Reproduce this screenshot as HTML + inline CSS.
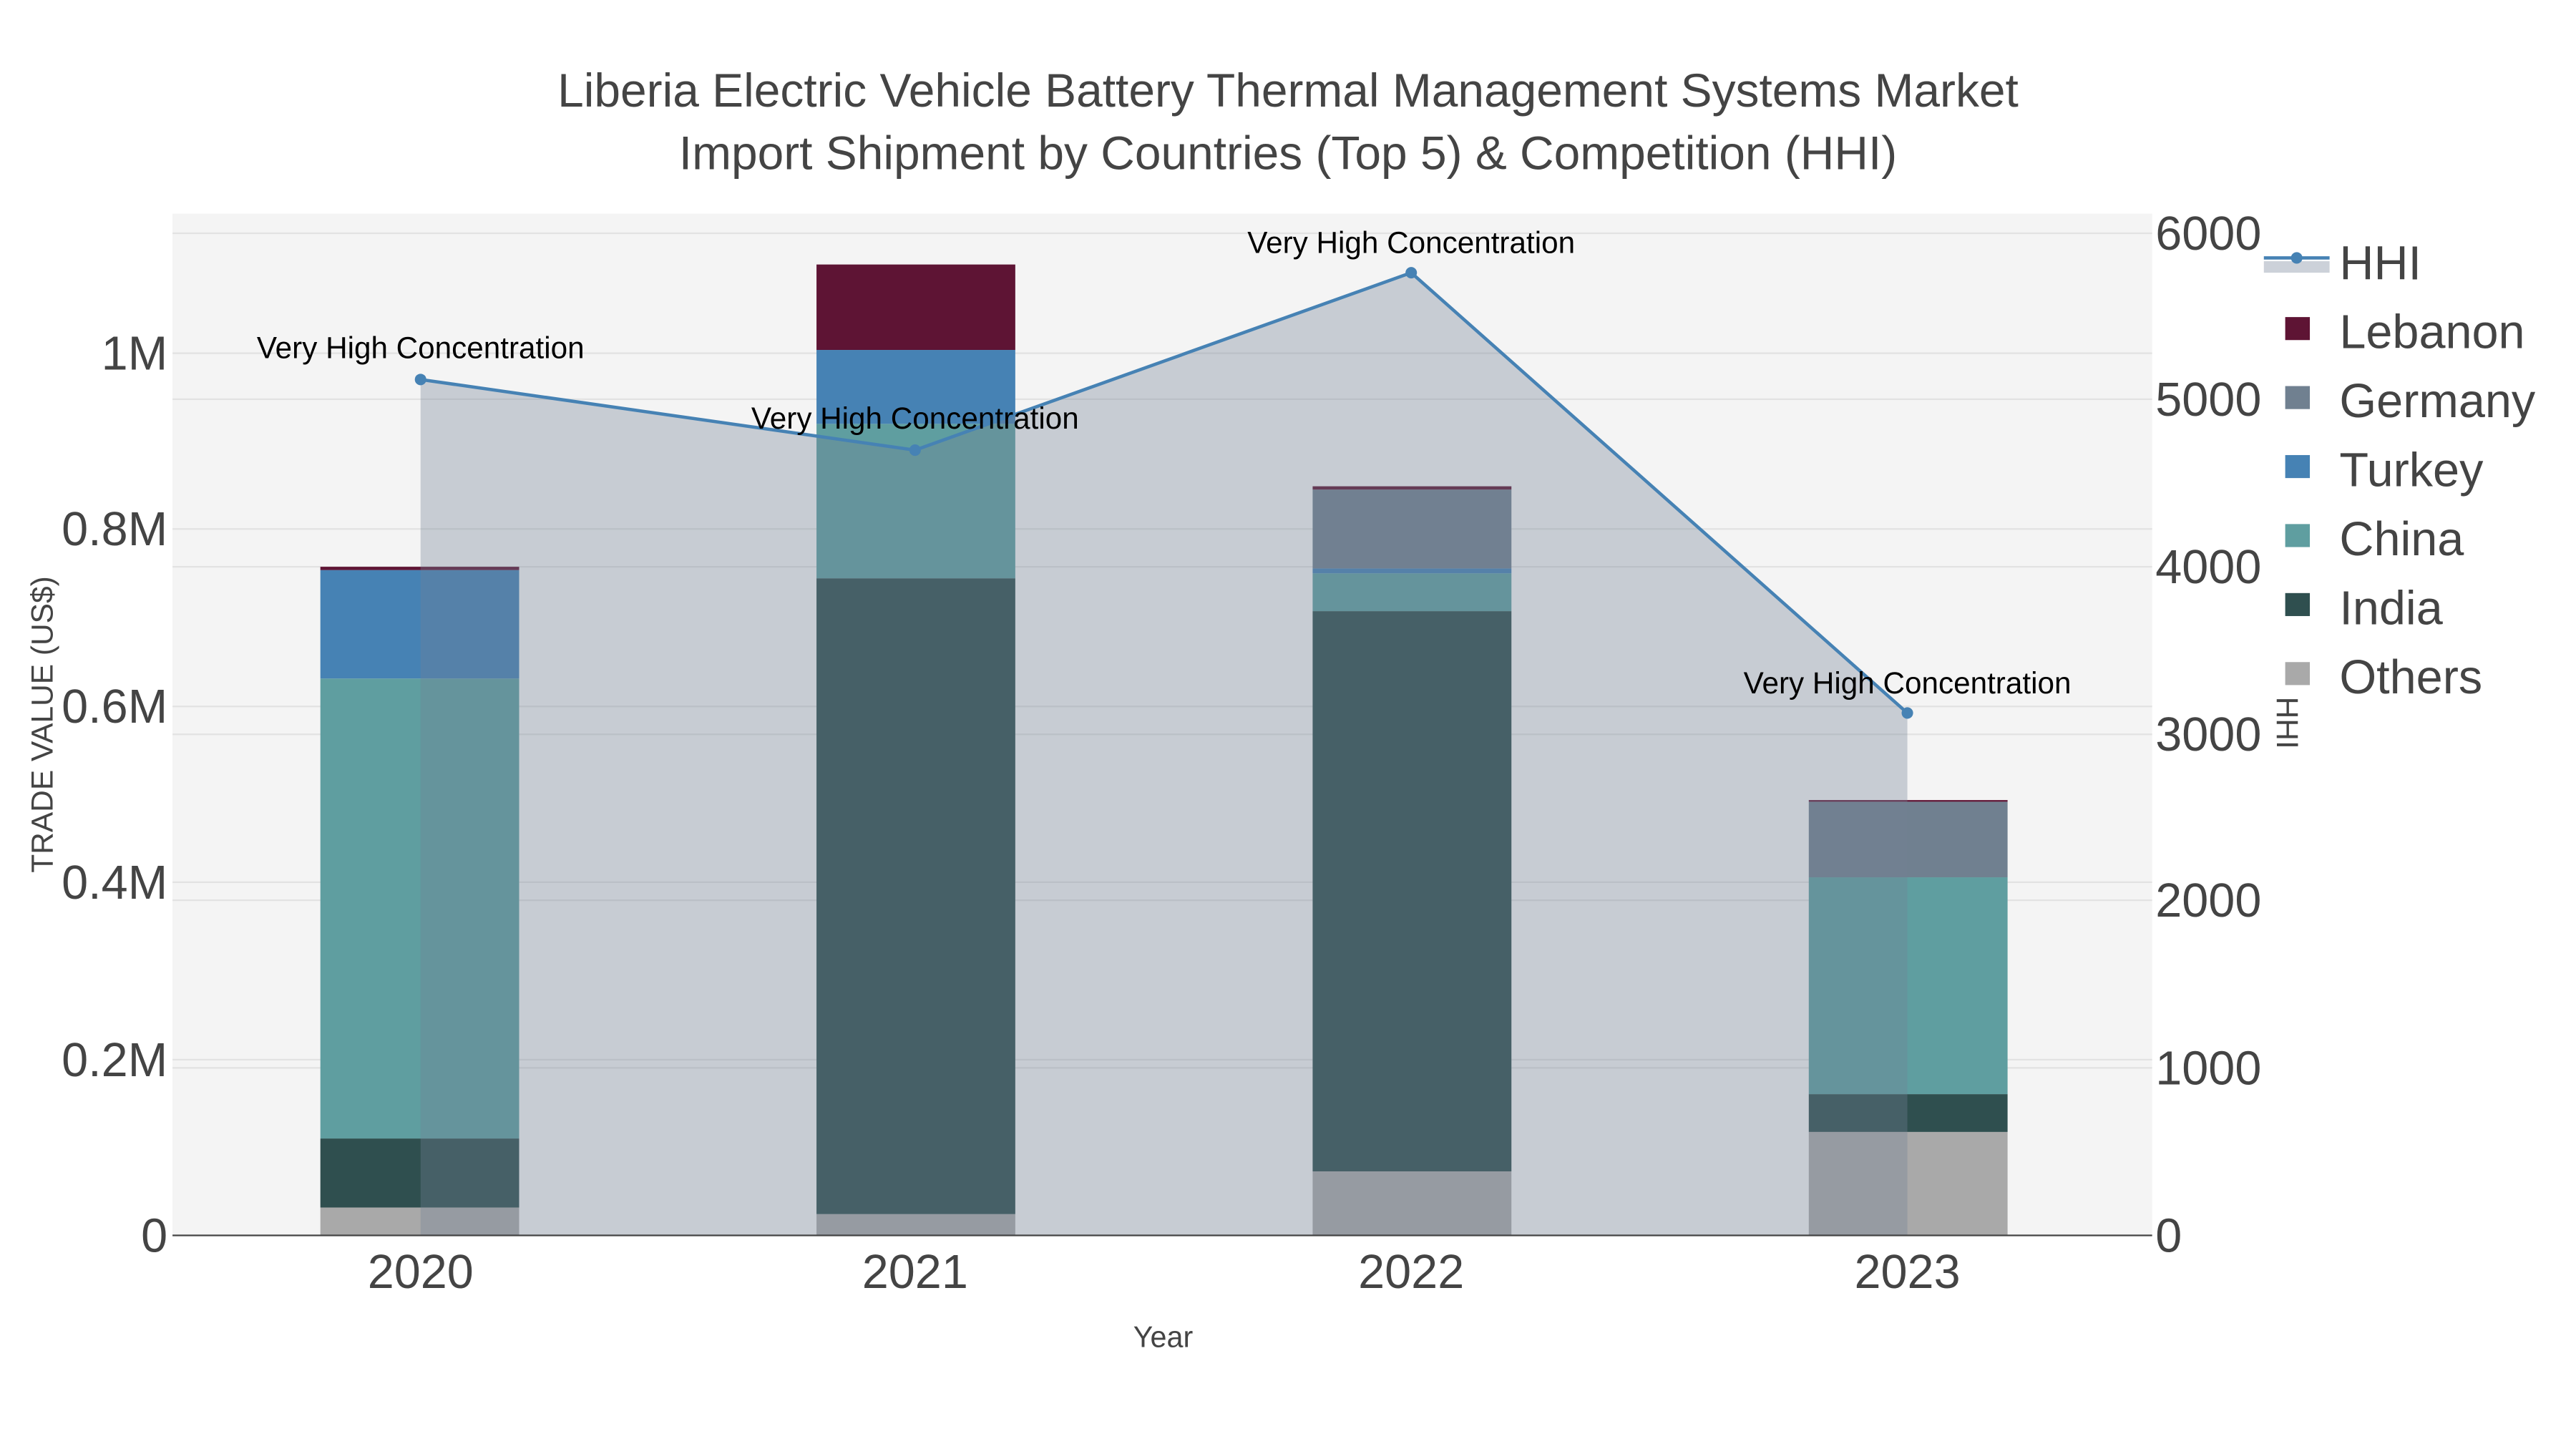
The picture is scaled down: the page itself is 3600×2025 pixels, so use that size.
<!DOCTYPE html>
<html><head><meta charset="utf-8"><style>
html,body{margin:0;padding:0;background:#fff;}
svg{display:block;}
text{font-family:"Liberation Sans",sans-serif;}
</style></head><body>
<svg width="3600" height="2025" viewBox="0 0 1568 882" preserveAspectRatio="none" xmlns="http://www.w3.org/2000/svg">
<rect x="0" y="0" width="1568" height="882" fill="#fff"/>
<rect x="105" y="130" width="1205" height="622" fill="#f4f4f4"/>
<g stroke="#e2e2e2" stroke-width="1">
<line x1="105" x2="1310" y1="645" y2="645"/><line x1="105" x2="1310" y1="537" y2="537"/>
<line x1="105" x2="1310" y1="430" y2="430"/><line x1="105" x2="1310" y1="322" y2="322"/>
<line x1="105" x2="1310" y1="215" y2="215"/>
<line x1="105" x2="1310" y1="142" y2="142"/><line x1="105" x2="1310" y1="243" y2="243"/>
<line x1="105" x2="1310" y1="345" y2="345"/><line x1="105" x2="1310" y1="447" y2="447"/>
<line x1="105" x2="1310" y1="548" y2="548"/><line x1="105" x2="1310" y1="650" y2="650"/>
</g>
<g>
<rect x="195" y="735" width="121" height="17" fill="#a9a9a9"/>
<rect x="195" y="693" width="121" height="42" fill="#2f4f4f"/>
<rect x="195" y="413" width="121" height="280" fill="#5f9ea0"/>
<rect x="195" y="347" width="121" height="66" fill="#4682b4"/>
<rect x="195" y="345" width="121" height="2" fill="#5e1434"/>

<rect x="497" y="739" width="121" height="13" fill="#a9a9a9"/>
<rect x="497" y="352" width="121" height="387" fill="#2f4f4f"/>
<rect x="497" y="258" width="121" height="94" fill="#5f9ea0"/>
<rect x="497" y="213" width="121" height="45" fill="#4682b4"/>
<rect x="497" y="161" width="121" height="52" fill="#5e1434"/>

<rect x="799" y="713" width="121" height="39" fill="#a9a9a9"/>
<rect x="799" y="372" width="121" height="341" fill="#2f4f4f"/>
<rect x="799" y="349" width="121" height="23" fill="#5f9ea0"/>
<rect x="799" y="346" width="121" height="3" fill="#4682b4"/>
<rect x="799" y="298" width="121" height="48" fill="#708090"/>
<rect x="799" y="296" width="121" height="2" fill="#5e1434"/>

<rect x="1101" y="689" width="121" height="63" fill="#a9a9a9"/>
<rect x="1101" y="666" width="121" height="23" fill="#2f4f4f"/>
<rect x="1101" y="534" width="121" height="132" fill="#5f9ea0"/>
<rect x="1101" y="488" width="121" height="46" fill="#708090"/>
<rect x="1101" y="487" width="121" height="1" fill="#5e1434"/>
</g>
<polygon points="256,231 557,274 859,166 1161,434 1161,752 256,752" fill="rgba(115,130,148,0.35)"/>
<line x1="105" x2="1310" y1="752" y2="752" stroke="#444" stroke-width="1"/>
<polyline points="256,231 557,274 859,166 1161,434" fill="none" stroke="#4682b4" stroke-width="2"/>
<g fill="#4682b4"><circle cx="256" cy="231" r="3.5"/><circle cx="557" cy="274" r="3.5"/><circle cx="859" cy="166" r="3.5"/><circle cx="1161" cy="434" r="3.5"/></g>
<g font-size="18.4" fill="#000" text-anchor="middle">
<text x="256" y="218">Very High Concentration</text>
<text x="557" y="261">Very High Concentration</text>
<text x="859" y="154">Very High Concentration</text>
<text x="1161" y="422">Very High Concentration</text>
</g>
<g font-size="28.7" fill="#444" text-anchor="middle">
<text x="784" y="65">Liberia Electric Vehicle Battery Thermal Management Systems Market</text>
<text x="784" y="103">Import Shipment by Countries (Top 5) &amp; Competition (HHI)</text>
</g>
<g font-size="29" fill="#444" text-anchor="end">
<text x="102" y="762">0</text><text x="102" y="655">0.2M</text><text x="102" y="547">0.4M</text>
<text x="102" y="440">0.6M</text><text x="102" y="332">0.8M</text><text x="102" y="225">1M</text>
</g>
<g font-size="29" fill="#444" text-anchor="start">
<text x="1312" y="762">0</text><text x="1312" y="660">1000</text><text x="1312" y="558">2000</text>
<text x="1312" y="457">3000</text><text x="1312" y="355">4000</text><text x="1312" y="253">5000</text>
<text x="1312" y="152">6000</text>
</g>
<g font-size="29" fill="#444" text-anchor="middle">
<text x="256" y="784">2020</text><text x="557" y="784">2021</text><text x="859" y="784">2022</text><text x="1161" y="784">2023</text>
</g>
<text x="708" y="820" font-size="18" fill="#444" text-anchor="middle">Year</text>
<text transform="translate(32,441) rotate(-90)" font-size="18.5" fill="#444" text-anchor="middle">TRADE VALUE (US$)</text>
<text transform="translate(1386,440) rotate(90)" font-size="18.5" fill="#444" text-anchor="middle">HHI</text>
<rect x="1378" y="159" width="40" height="7" fill="#ccd1d9"/>
<line x1="1378" x2="1418" y1="157" y2="157" stroke="#4682b4" stroke-width="2"/>
<circle cx="1398" cy="157" r="3.5" fill="#4682b4"/>
<g>
<rect x="1391" y="193" width="15" height="14" fill="#5e1434"/>
<rect x="1391" y="235" width="15" height="14" fill="#708090"/>
<rect x="1391" y="277" width="15" height="14" fill="#4682b4"/>
<rect x="1391" y="319" width="15" height="14" fill="#5f9ea0"/>
<rect x="1391" y="361" width="15" height="14" fill="#2f4f4f"/>
<rect x="1391" y="403" width="15" height="14" fill="#a9a9a9"/>
</g>
<g font-size="29" fill="#444">
<text x="1424" y="170">HHI</text><text x="1424" y="212">Lebanon</text><text x="1424" y="254">Germany</text>
<text x="1424" y="296">Turkey</text><text x="1424" y="338">China</text><text x="1424" y="380">India</text>
<text x="1424" y="422">Others</text>
</g>
</svg>
</body></html>
